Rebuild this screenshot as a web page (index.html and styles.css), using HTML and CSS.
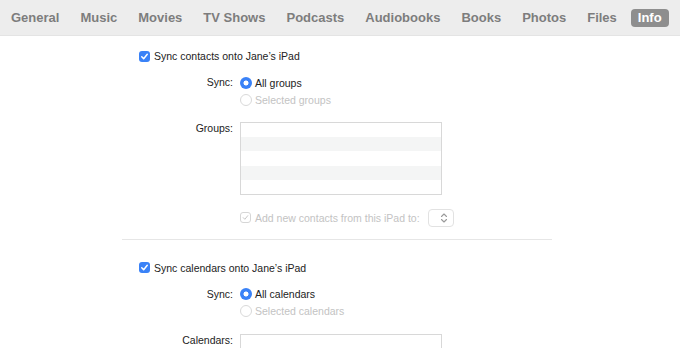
FILE: index.html
```html
<!DOCTYPE html>
<html>
<head>
<meta charset="utf-8">
<link rel="stylesheet" href="styles.css">
</head>
<body>
<nav class="tabs">
  <span class="tab">General</span>
  <span class="tab">Music</span>
  <span class="tab">Movies</span>
  <span class="tab">TV Shows</span>
  <span class="tab">Podcasts</span>
  <span class="tab">Audiobooks</span>
  <span class="tab">Books</span>
  <span class="tab">Photos</span>
  <span class="tab">Files</span>
  <span class="tab active">Info</span>
</nav>
<main class="panel">
  <section class="section first">
    <label class="check-row">
      <span class="checkbox on"><svg viewBox="0 0 12 12" width="12" height="12"><path d="M3 6.2 L5.1 8.4 L9 3.6" fill="none" stroke="#fff" stroke-width="1.6" stroke-linecap="round" stroke-linejoin="round"/></svg></span>
      <span>Sync contacts onto Jane’s iPad</span>
    </label>
    <div class="form">
      <div class="label row-h">Sync:</div>
      <div class="radios">
        <div class="radio-row"><span class="radio on"></span><span>All groups</span></div>
        <div class="radio-row disabled"><span class="radio"></span><span>Selected groups</span></div>
      </div>
      <div class="label list-label">Groups:</div>
      <div class="listbox">
        <div class="lrow"></div><div class="lrow alt"></div><div class="lrow"></div><div class="lrow alt"></div><div class="lrow"></div>
      </div>
      <div></div>
      <div class="add-row disabled">
        <span class="checkbox off"><svg viewBox="0 0 12 12" width="12" height="12"><path d="M3 6.2 L5.1 8.4 L9 3.6" fill="none" stroke="#c4c4c4" stroke-width="1.3" stroke-linecap="round" stroke-linejoin="round"/></svg></span>
        <span>Add new contacts from this iPad to:</span>
        <span class="popup"><svg viewBox="0 0 8 12" width="8" height="12"><path d="M1.5 4.5 L4 2 L6.5 4.5 M1.5 7.5 L4 10 L6.5 7.5" fill="none" stroke="#9a9a9a" stroke-width="1.1" stroke-linecap="round" stroke-linejoin="round"/></svg></span>
      </div>
    </div>
  </section>
  <hr class="divider">
  <section class="section second">
    <label class="check-row">
      <span class="checkbox on"><svg viewBox="0 0 12 12" width="12" height="12"><path d="M3 6.2 L5.1 8.4 L9 3.6" fill="none" stroke="#fff" stroke-width="1.6" stroke-linecap="round" stroke-linejoin="round"/></svg></span>
      <span>Sync calendars onto Jane’s iPad</span>
    </label>
    <div class="form">
      <div class="label row-h">Sync:</div>
      <div class="radios">
        <div class="radio-row"><span class="radio on"></span><span>All calendars</span></div>
        <div class="radio-row disabled"><span class="radio"></span><span>Selected calendars</span></div>
      </div>
      <div class="label list-label">Calendars:</div>
      <div class="listbox tall">
        <div class="lrow"></div>
      </div>
    </div>
  </section>
</main>
</body>
</html>
```

FILE: styles.css
```css
* { box-sizing: border-box; }
html, body { margin: 0; padding: 0; }
body {
  width: 680px;
  height: 348px;
  overflow: hidden;
  background: #fff;
  font-family: "Liberation Sans", Arial, sans-serif;
  font-size: 10.5px;
  color: #222;
}
.tabs {
  height: 36px;
  background: #ededed;
  border-bottom: 1px solid #e4e4e4;
  display: flex;
  align-items: center;
  gap: 21px;
  padding-left: 11px;
  padding-top: 1px;
}
.tab {
  font-size: 13px;
  font-weight: bold;
  color: #7d7d7d;
  line-height: 18px;
}
.tab.active {
  background: #8e8e8e;
  color: #fff;
  border-radius: 4px;
  padding: 0 7px;
  margin-left: -7px;
}
.panel {
  width: 430px;
  margin-left: 122px;
  height: 312px;
  overflow: hidden;
}
.section.first { padding-top: 11px; }
.section.second { padding-top: 19px; }
.check-row {
  display: flex;
  align-items: center;
  gap: 4px;
  height: 18px;
  padding-left: 17px;
}
.checkbox {
  width: 11px;
  height: 11px;
  border-radius: 3px;
  display: flex;
  align-items: center;
  justify-content: center;
  flex: none;
}
.checkbox svg { width: 11px; height: 11px; }
.checkbox.on { background: #3a82f7; }
.checkbox.off { background: #fff; border: 1px solid #d6d6d6; }
.form {
  display: grid;
  grid-template-columns: 111px 1fr;
  column-gap: 7px;
  margin-top: 9px;
}
.label {
  text-align: right;
}
.row-h { line-height: 17px; }
.radios { display: flex; flex-direction: column; }
.radio-row {
  display: flex;
  align-items: center;
  gap: 3px;
  height: 17px;
}
.radio {
  width: 12px;
  height: 12px;
  border-radius: 50%;
  border: 1px solid #d9d9d9;
  background: #fff;
  flex: none;
}
.radio.on {
  border: none;
  background: radial-gradient(circle, #fff 0 2.2px, #3a82f7 2.8px);
}
.disabled { color: #c3c3c3; }
.list-label {
  margin-top: 14px;
  line-height: 13px;
}
.listbox {
  margin-top: 14px;
  width: 202px;
  border: 1px solid #d8d8d8;
  display: flex;
  flex-direction: column;
}
.lrow { height: 14.2px; background: #fff; }
.lrow.alt { background: #f4f5f5; }
.add-row {
  display: flex;
  align-items: center;
  gap: 4px;
  height: 18px;
  margin-top: 14px;
}
.popup {
  margin-left: 4px;
  width: 26px;
  height: 18px;
  border: 1px solid #e2e2e2;
  border-radius: 4px;
  display: flex;
  align-items: center;
  justify-content: flex-end;
  padding-right: 5px;
}
.divider {
  margin: 12px 0 0 0;
  border: none;
  height: 1px;
  background: #e6e6e6;
}
```
